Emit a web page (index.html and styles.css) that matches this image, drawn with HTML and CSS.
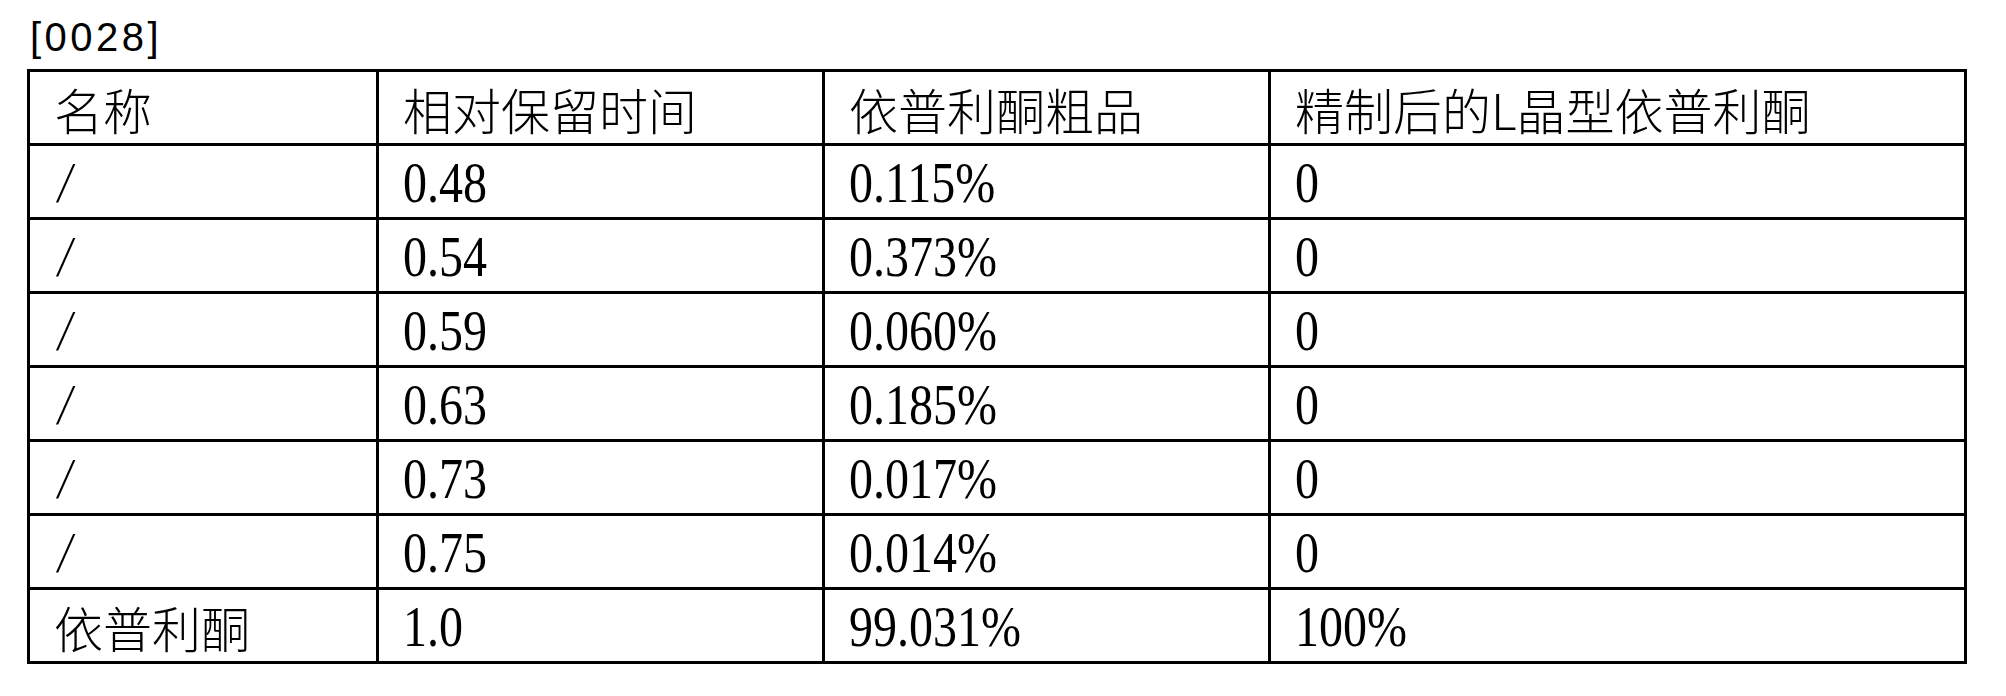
FILE: index.html
```html
<!DOCTYPE html>
<html lang="zh">
<head>
<meta charset="utf-8">
<title>[0028]</title>
<link rel="stylesheet" href="styles.css">
</head>
<body>
<p class="para-no">[0028]</p>
<div class="data-table">
  <div class="cell cjk">名称</div>
  <div class="cell cjk">相对保留时间</div>
  <div class="cell cjk">依普利酮粗品</div>
  <div class="cell cjk">精制后的L晶型依普利酮</div>

  <div class="cell slash"><span class="slash-mark">/</span></div>
  <div class="cell numcell"><span class="num">0.48</span></div>
  <div class="cell numcell"><span class="num">0.115%</span></div>
  <div class="cell numcell"><span class="num">0</span></div>

  <div class="cell slash"><span class="slash-mark">/</span></div>
  <div class="cell numcell"><span class="num">0.54</span></div>
  <div class="cell numcell"><span class="num">0.373%</span></div>
  <div class="cell numcell"><span class="num">0</span></div>

  <div class="cell slash"><span class="slash-mark">/</span></div>
  <div class="cell numcell"><span class="num">0.59</span></div>
  <div class="cell numcell"><span class="num">0.060%</span></div>
  <div class="cell numcell"><span class="num">0</span></div>

  <div class="cell slash"><span class="slash-mark">/</span></div>
  <div class="cell numcell"><span class="num">0.63</span></div>
  <div class="cell numcell"><span class="num">0.185%</span></div>
  <div class="cell numcell"><span class="num">0</span></div>

  <div class="cell slash"><span class="slash-mark">/</span></div>
  <div class="cell numcell"><span class="num">0.73</span></div>
  <div class="cell numcell"><span class="num">0.017%</span></div>
  <div class="cell numcell"><span class="num">0</span></div>

  <div class="cell slash"><span class="slash-mark">/</span></div>
  <div class="cell numcell"><span class="num">0.75</span></div>
  <div class="cell numcell"><span class="num">0.014%</span></div>
  <div class="cell numcell"><span class="num">0</span></div>

  <div class="cell cjk">依普利酮</div>
  <div class="cell numcell"><span class="num">1.0</span></div>
  <div class="cell numcell"><span class="num">99.031%</span></div>
  <div class="cell numcell"><span class="num">100%</span></div>
</div>
</body>
</html>
```

FILE: styles.css
```css
html, body {
  margin: 0;
  padding: 0;
  background: #ffffff;
  color: #000000;
}

.para-no {
  margin: 17px 0 0 0;
  padding-left: 30px;
  height: 40px;
  font-family: "Liberation Sans", Arial, sans-serif;
  font-size: 40px;
  line-height: 40px;
  letter-spacing: 3.5px;
}

.data-table {
  margin: 12px 0 0 27px;
  width: 1937px;
  display: grid;
  grid-template-columns: 349px 446px 446px 696px;
  grid-auto-rows: 74px;
  border-top: 3px solid #000;
  border-left: 3px solid #000;
  box-sizing: content-box;
}

.cell {
  box-sizing: border-box;
  border-right: 3px solid #000;
  border-bottom: 3px solid #000;
  padding: 13px 0 0 24px;
  white-space: nowrap;
  overflow: hidden;
}

.cjk {
  font-family: "Noto Sans CJK SC", "Noto Sans CJK JP", sans-serif;
  font-weight: 300;
  font-size: 49px;
  line-height: 48px;
}

.numcell {
  font-family: "Liberation Serif", "Times New Roman", serif;
  font-size: 48px;
  line-height: 48px;
  padding-top: 16px;
}

.num {
  display: inline-block;
  transform: scaleY(1.18);
  transform-origin: 0 40px;
}

.slash {
  font-family: "Liberation Serif", "Times New Roman", serif;
  font-size: 48px;
  line-height: 48px;
  padding-top: 16px;
  padding-left: 26px;
}

.slash-mark {
  display: inline-block;
  transform: skewX(-9deg) scaleY(1.2);
  transform-origin: 0 40px;
}
```
